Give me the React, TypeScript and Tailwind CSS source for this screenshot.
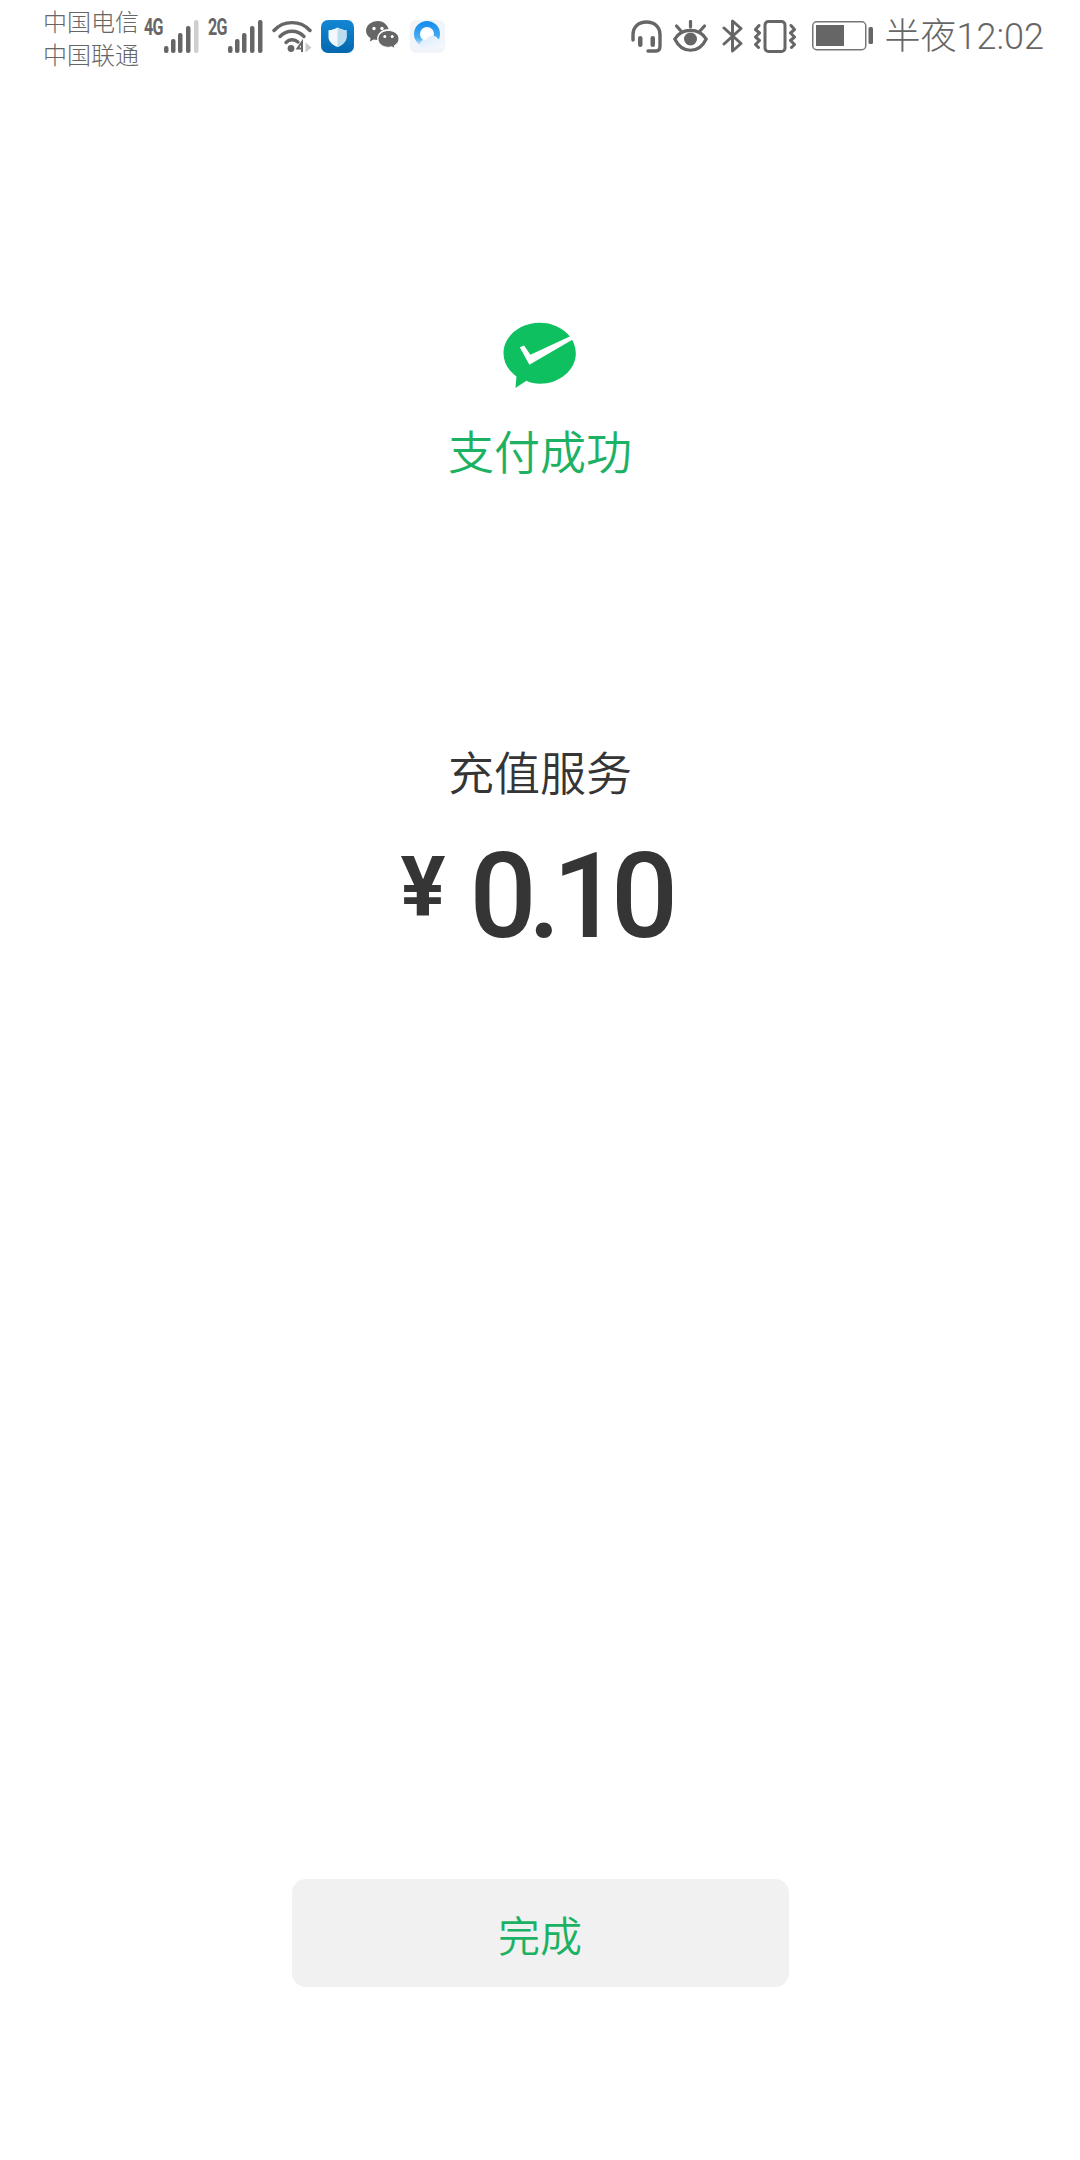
const cjk = "font-['Noto_Sans_CJK_SC','Noto_Sans',sans-serif]"

function Signal({ label, lastDim }: { label: string; lastDim?: boolean }) {
  const bars = [
    { x: 0, y: 26, h: 7 },
    { x: 7, y: 19, h: 14 },
    { x: 14, y: 13, h: 20 },
    { x: 22, y: 6, h: 27 },
    { x: 30, y: 0, h: 33 },
  ]
  return (
    <div className="flex items-start">
      <span className="w-[20px] text-[23px] leading-[16px] font-bold text-[#666] tracking-[-1px] scale-x-[0.7] origin-left font-['Roboto',sans-serif]">
        {label}
      </span>
      <svg width="35" height="33" viewBox="0 0 35 33">
        {bars.map((b, i) => (
          <rect
            key={i}
            x={b.x}
            y={b.y}
            width="4.5"
            height={b.h}
            rx="2"
            fill={lastDim && i === 4 ? '#cfcfcf' : '#666'}
          />
        ))}
      </svg>
    </div>
  )
}

function Wifi() {
  return (
    <svg width="40" height="33" viewBox="0 0 40 33" fill="none" stroke="#666" strokeWidth="3.4" strokeLinecap="round">
      <path d="M2 10.5C11.5 0 28.5 0 38 10.5" />
      <path d="M8 16.5C14.5 9.5 25.5 9.5 32 16.5" />
      <path d="M14 22.5C17.5 19 22.5 19 26 22" />
      <circle cx="19" cy="28.5" r="3.4" fill="#666" stroke="none" />
      <path d="M30 32V22L25.5 28.5H31" strokeWidth="2" strokeLinecap="butt" />
      <path d="M33.5 22.5L39.5 27.5L33.5 32.5Z" fill="#c9c9c9" stroke="none" />
    </svg>
  )
}

function ShieldApp() {
  return (
    <svg width="33" height="33" viewBox="0 0 33 33">
      <defs>
        <linearGradient id="shieldBg" x1="0" y1="0" x2="0" y2="1">
          <stop offset="0" stopColor="#1287d4" />
          <stop offset="1" stopColor="#0468ae" />
        </linearGradient>
      </defs>
      <rect width="33" height="33" rx="7" fill="url(#shieldBg)" />
      <path d="M16.5 7.5C19 9 22 10 25.5 10.2V17C25.5 21.5 21.5 25 16.5 27C11.5 25 7.5 21.5 7.5 17V10.2C11 10 14 9 16.5 7.5Z" fill="#f2f8fc" />
      <path d="M16.5 7.5C19 9 22 10 25.5 10.2V17C25.5 21.5 21.5 25 16.5 27Z" fill="#bcdcf0" />
    </svg>
  )
}

function WeChat() {
  return (
    <svg width="33" height="30" viewBox="0 0 33 30" fill="#666">
      <path d="M12 0C5.4 0 0 4.3 0 9.7c0 3.1 1.8 5.7 4.6 7.5L3.7 20.6l4-2.1c1.2.3 2.5.5 3.6.5 0-.5-.1-.9-.1-1.4 0-5.3 5-9.5 11.4-9.5C21.1 3.2 17 0 12 0Z" />
      <path d="M22.5 9.5c-5.8 0-10.5 3.7-10.5 8.4 0 4.7 4.7 8.4 10.5 8.4 1.1 0 2.2-.2 3.2-.5l3.4 1.9-.8-3c2.8-1.6 4.7-4 4.7-6.8 0-4.7-4.7-8.4-10.5-8.4Z" stroke="#fff" strokeWidth="1" />
      <circle cx="8" cy="7.5" r="1.7" fill="#fff" />
      <circle cx="16" cy="7.5" r="1.7" fill="#fff" />
      <circle cx="18.8" cy="15.5" r="1.5" fill="#fff" />
      <circle cx="26.2" cy="15.5" r="1.5" fill="#fff" />
    </svg>
  )
}

function QQBrowser() {
  return (
    <svg width="35" height="33" viewBox="0 0 35 33">
      <defs>
        <linearGradient id="qqRing" x1="0" y1="0" x2="0" y2="1">
          <stop offset="0" stopColor="#1a8fec" />
          <stop offset="0.7" stopColor="#49aef4" />
          <stop offset="1" stopColor="#b5dcf8" />
        </linearGradient>
        <linearGradient id="qqCloud" x1="0" y1="0" x2="1" y2="1">
          <stop offset="0" stopColor="#d6eafb" />
          <stop offset="1" stopColor="#f7fafd" />
        </linearGradient>
      </defs>
      <rect width="35" height="33" rx="6" fill="#f1f5f9" />
      <circle cx="17" cy="14" r="10" fill="#fff" stroke="url(#qqRing)" strokeWidth="6" />
      <path d="M10 27C9 22 12 19 16 20C18 15 26 14 28 19C31 19 34 21 34 24C34 26 32.5 27.5 30 27.5H12C11 27.5 10.5 27.5 10 27Z" fill="url(#qqCloud)" />
    </svg>
  )
}

function Headset() {
  return (
    <svg width="31" height="33" viewBox="0 0 31 33" fill="none" stroke="#666" strokeWidth="3.4" strokeLinecap="round">
      <path d="M2 20V15C2 6.5 8 2 15.5 2S29 6.5 29 15V26C29 29 27.5 31 25 31H17" />
      <rect x="7" y="16" width="4.5" height="11" rx="2.2" fill="#666" stroke="none" />
      <rect x="19.5" y="16" width="4.5" height="11" rx="2.2" fill="#666" stroke="none" />
    </svg>
  )
}

function Eye() {
  return (
    <svg width="35" height="32" viewBox="0 0 35 32" fill="none" stroke="#666" strokeWidth="3.2" strokeLinecap="round">
      <path d="M1.8 19C9 7.5 26 7.5 33.2 19C26 34 9 34 1.8 19Z" />
      <circle cx="17.5" cy="19" r="6.5" fill="#666" stroke="none" />
      <path d="M17.5 1.5V7" />
      <path d="M3.5 6L8 11" />
      <path d="M31.5 6L27 11" />
    </svg>
  )
}

function Bluetooth() {
  return (
    <svg width="21" height="34" viewBox="0 0 21 34" fill="none" stroke="#666" strokeWidth="3" strokeLinecap="round" strokeLinejoin="round">
      <path d="M2 9L19 24.5L10.5 32V2L19 9.5L2 25" />
    </svg>
  )
}

function Vibrate() {
  return (
    <svg width="42" height="33" viewBox="0 0 42 33" fill="none" stroke="#666" strokeWidth="3" strokeLinecap="round" strokeLinejoin="round">
      <rect x="11" y="1.5" width="20" height="30" rx="3.5" />
      <path d="M5 5.5L1.5 9.5L5.5 13L1.5 17L5.5 20.5L1.5 24.5L4.5 27.5" />
      <path d="M37 5.5L40.5 9.5L36.5 13L40.5 17L36.5 20.5L40.5 24.5L37.5 27.5" />
    </svg>
  )
}

function Battery() {
  return (
    <svg width="61" height="30" viewBox="0 0 61 30">
      <rect x="0.75" y="0.75" width="53" height="28" rx="4" fill="none" stroke="#777" strokeWidth="1.5" />
      <rect x="4" y="4" width="28" height="21" fill="#666" />
      <rect x="56.5" y="6" width="4.5" height="17" rx="1.5" fill="#666" />
    </svg>
  )
}

function PayLogo() {
  return (
    <svg width="74" height="67" viewBox="222 66 220 202">
      <path
        d="M331 68C271 68 222 109 222 160C222 188 237 213 261 230L258 265L291 243C304 250 317 252 331 252C391 252 440 211 440 160C440 109 391 68 331 68Z"
        fill="#0fc060"
      />
      <path d="M271 142L284 137L303 165L425 108L432 118L300 195Z" fill="#fff" />
    </svg>
  )
}

export default function App() {
  return (
    <div className={`w-[1080px] h-[2160px] bg-white flex flex-col items-center ${cjk}`}>
      <div className="w-full h-[72px] flex items-start justify-between pl-[43px] pr-[36px]">
        <div className="flex items-start">
          <div className="w-[101px] pt-[4px] text-[24px] leading-[33px] text-[#666] font-light">
            <div>中国电信</div>
            <div>中国联通</div>
          </div>
          <div className="flex items-center h-[72px]">
            <Signal label="4G" lastDim />
            <div className="w-[9px]" />
            <Signal label="2G" />
            <div className="w-[9px]" />
            <Wifi />
            <div className="w-[9px]" />
            <ShieldApp />
            <div className="w-[12px]" />
            <WeChat />
            <div className="w-[11px]" />
            <QQBrowser />
          </div>
        </div>
        <div className="flex items-center h-[72px]">
          <Headset />
          <div className="w-[11px]" />
          <Eye />
          <div className="w-[14px]" />
          <Bluetooth />
          <div className="w-[11px]" />
          <Vibrate />
          <div className="w-[16px]" />
          <Battery />
          <span className="ml-[12px] -mt-[2px] text-[36px] leading-none text-[#666] font-light">
            半夜<span className="font-['Roboto',sans-serif] font-light">12:02</span>
          </span>
        </div>
      </div>

      <div className="mt-[250px]">
        <PayLogo />
      </div>
      <div className="mt-[27px] text-[46px] leading-[66px] text-[#1db263] font-[350]">支付成功</div>

      <div className="mt-[255px] text-[46px] leading-[66px] text-[#353535] font-[350]">充值服务</div>
      <div className="mt-[34px] pr-[10px] flex items-start font-['Roboto',sans-serif] font-medium text-[#353535]">
        <span className="text-[84px] leading-[100px] font-bold mt-[1px] mr-[24px]">¥</span>
        <span className="text-[118px] leading-[120px] tracking-[-8.5px]">0.10</span>
      </div>

      <button className="mt-[922px] w-[497px] h-[108px] rounded-[14px] bg-[#f1f1f1] text-[42px] text-[#1db263] font-[350]">
        完成
      </button>
    </div>
  )
}
